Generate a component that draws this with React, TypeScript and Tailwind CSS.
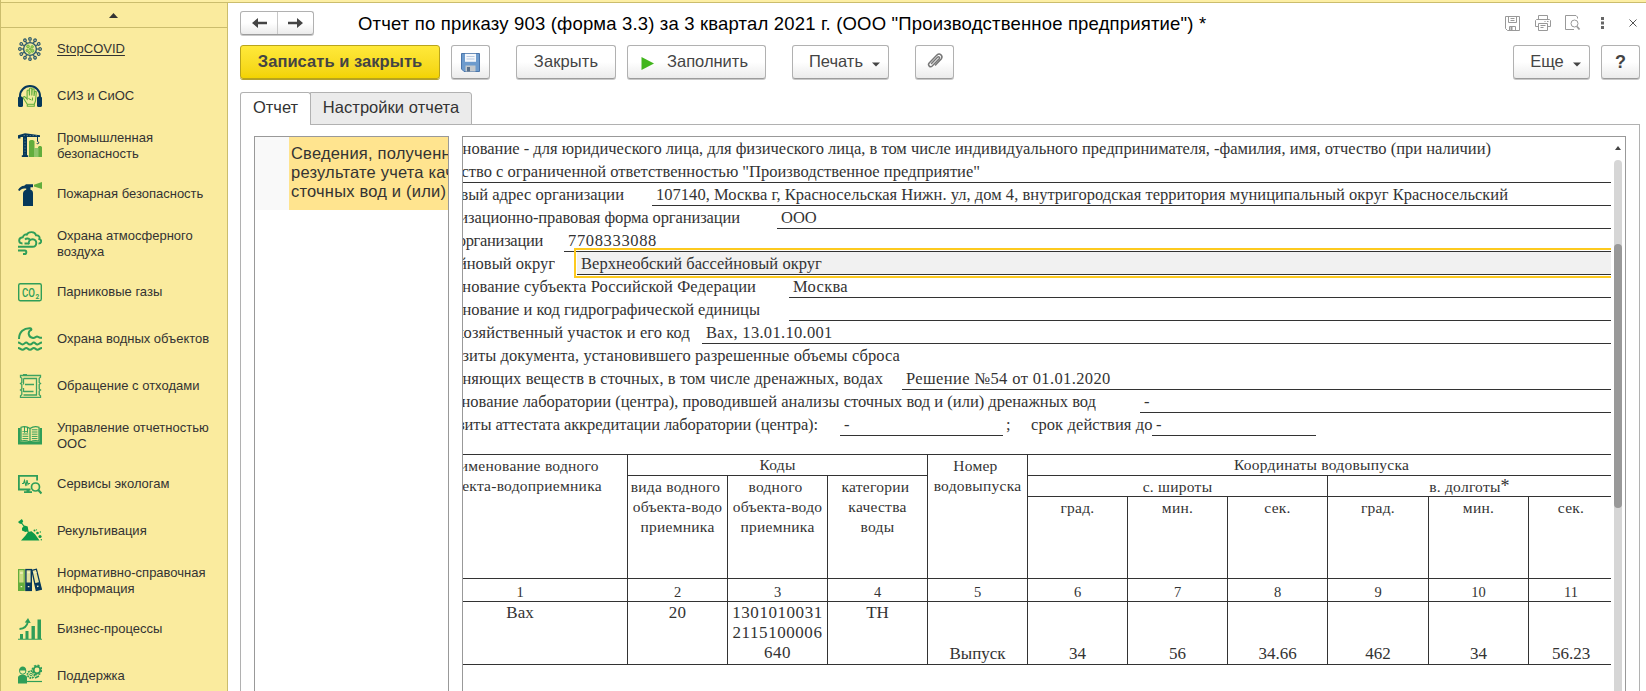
import type { ReactNode } from 'react';

const NAVY = '#06385a';
const LIME = '#62ad3c';
const GREEN = '#2f9e58';

interface MenuItem {
  lines: string[];
  icon: ReactNode;
  underline?: boolean;
}

const spikes = [0, 30, 60, 90, 120, 150, 180, 210, 240, 270, 300, 330];

const menu: MenuItem[] = [
  {
    lines: ['StopCOVID'],
    underline: true,
    icon: (
      <>
        {spikes.map((angle) => (
          <g key={angle} transform={`rotate(${angle} 12 12)`} fill="none" stroke="#2f5b6b" strokeWidth="1.2">
            <path d="M12 5.500V3.400" />
            <circle cx="12" cy="1.900" r="1.300" />
          </g>
        ))}
        <circle cx="12" cy="12" r="6.400" fill="#ebe99c" stroke="#2f5b6b" strokeWidth="1.400" />
        <g fill="#a6cf5f" stroke={LIME} strokeWidth=".8">
          <circle cx="10" cy="9.400" r="1.400" />
          <circle cx="14.200" cy="9.800" r="1.200" />
          <circle cx="9.200" cy="13.400" r="1.200" />
          <circle cx="12.200" cy="12" r="1" />
          <circle cx="14.400" cy="13.800" r="1.500" />
          <circle cx="11.400" cy="15.600" r="1" />
        </g>
      </>
    ),
  },
  {
    lines: ['СИЗ и СиОС'],
    icon: (
      <>
        <path d="M2 14v-2a10 10 0 0 1 20 0v2" fill="none" stroke={NAVY} strokeWidth="2" />
        <rect x="0" y="12.500" width="5" height="10.500" rx="1.600" fill={NAVY} />
        <rect x="19" y="12.500" width="5" height="10.500" rx="1.600" fill={NAVY} />
        <path
          d="M9.300 22.300v-2L5.300 14c-.5-1.300 1.200-1.900 2-.9l1.800 2V7c0-1.300 2-1.300 2.100 0l.3 4.500V5c0-1.400 2.300-1.400 2.300 0v6.500l.4-5.700c.1-1.300 2-1.200 2 .1l-.2 6 .6-3.700c.3-1.200 1.800-1 1.700.3l-.8 8.500-1.200 3v2.300z"
          fill="#eeeb9b"
          stroke={LIME}
          strokeWidth="1.100"
        />
        <path d="M9.300 20.300h7M10.500 14.500l3 1.500M14.500 13.500v3" stroke={LIME} strokeWidth="1" />
      </>
    ),
  },
  {
    lines: ['Промышленная', 'безопасность'],
    icon: (
      <>
        <path d="M11 24V8.500c0-2 5.500-2 5.500 0V24zM20 24V14.500c0-2 4-2 4 0V24z" fill={LIME} />
        <path d="M16 15h4.500v9H16z" fill="#8dc46a" />
        <path d="M5 3h4v19.500H5zM3.800 22.300h6.400V24H3.800zM0 2.200L7 .3l15 2v1.700H0zM0 3.500h2.500v2H0z" fill={NAVY} />
        <path d="M7 5.500v16M5.500 2.600h14" stroke="#4f7180" strokeWidth="1" strokeDasharray="1.500 1.500" />
        <path d="M19.500 4v4.500c2 .3 1.500 3-.8 2" fill="none" stroke={NAVY} strokeWidth="1" />
      </>
    ),
  },
  {
    lines: ['Пожарная безопасность'],
    icon: (
      <>
        <path d="M5 11.500c0-2 1.500-3.500 3.200-3.800V6.500H6.300C4 6.500 2.800 7.500 1.500 9L0 8c1.500-2.800 3.500-4 6.200-4.200L8 2.300h7v3h-2.500v2.400C14.500 8.200 15 9.600 15 11.500V24H5z" fill={NAVY} />
        <path d="M16 2.700L24 0v7l-8-2.500z" fill={LIME} />
      </>
    ),
  },
  {
    lines: ['Охрана атмосферного', 'воздуха'],
    icon: (
      <g fill="none" stroke={GREEN} strokeWidth="1.900">
        <path d="M4.500 12.500C.2 12.500-.2 6.800 4.800 6.300 5.800 3 8 3.400 8.700 3.700 10.500.2 17 .2 18 4.300c3.300-.2 4 2.200 3.300 3.700 3 1.200 2.200 4.600-.8 4.600" />
        <path d="M6.500 12.500h4M7 8.500c1.500-1.500 4-1.200 4.800.3" />
        <path d="M0 15.800h14.500c5 0 5-7.600.2-7.600-3 0-4.600 2.600-3.700 5.200" />
        <path d="M0 19.500h6.800c2.200.2 2 3.500-.3 3.500H5" />
      </g>
    ),
  },
  {
    lines: ['Парниковые газы'],
    icon: (
      <>
        <rect x=".7" y="3.700" width="22.600" height="17" rx="1.600" fill="none" stroke={GREEN} strokeWidth="1.400" />
        <text x="4" y="16.800" fontSize="12.500" fill={GREEN} textLength="13" lengthAdjust="spacingAndGlyphs" fontFamily="Roboto, sans-serif" fontWeight="500">
          CO
        </text>
        <text x="17.500" y="18.600" fontSize="6.500" fill={GREEN} fontFamily="Roboto, sans-serif" fontWeight="700">
          2
        </text>
      </>
    ),
  },
  {
    lines: ['Охрана водных объектов'],
    icon: (
      <g fill="none" stroke={GREEN} strokeWidth="2">
        <path d="M1 12C1 5 6 .8 12.300 1.200c1.200.1 1.500 1.800.3 2C9.500 5 10.200 10.500 15 11c2 .2 2.800-1.400 4-1.400 1.500 0 2 1.400 5 1.200" />
        <path d="M0 15.600c2.400 0 2.400 1.800 4.500 1.800s2.100-1.800 3.700-1.800c1.700 0 1.700 1.800 3.800 1.800s2.100-1.800 3.800-1.800 1.700 1.800 3.700 1.800S21.600 15.600 24 15.600" />
        <path d="M0 20.900c2.400 0 2.400 1.800 4.500 1.800s2.100-1.800 3.700-1.800c1.700 0 1.700 1.800 3.800 1.800s2.100-1.800 3.800-1.800 1.700 1.800 3.700 1.800S21.600 20.900 24 20.900" />
      </g>
    ),
  },
  {
    lines: ['Обращение с отходами'],
    icon: (
      <g fill="none" stroke="#3ea260" strokeWidth="1.300">
        <path d="M2.500 1.500h20v1.700l-1.300 1v4.300l1.300 1-1.300 1v4.500l1.300 1-1.300 1v3.700l1.300 1v1.800h-20v-1.800l1.300-1v-3.700l-1.300-1 1.300-1v-4.500l-1.300-1 1.300-1V4.200l-1.300-1z" />
        <path d="M5.500 4.500h13v16.500h-13M5.500 4.500v6M5.500 14v4M5 .7h4M7 10.500h9M5.500 17.500h10" />
      </g>
    ),
  },
  {
    lines: ['Управление отчетностью', 'ООС'],
    icon: (
      <>
        <path d="M0 5h2.500v13.500h19V5H24v16.500H0z" fill={GREEN} />
        <path d="M12 19V5.500C9 3.300 5.500 3.300 3 4.200V18c3.500-.7 6-.5 9 1zM12 19V5.500c3-2.200 6.500-2.200 9-1.300V18c-3.500-.7-6-.5-9 1z" fill="none" stroke={GREEN} strokeWidth="1.200" />
        <path d="M4.500 8.500h1.200M4.500 11h5.800M4.500 13.300h5.800M4.500 15.600h5.800M13.800 6.800h5.700M13.800 9h5.700M13.800 11.200h5.700M13.800 13.400h5.700M13.800 15.600h5.700" stroke={GREEN} strokeWidth="1" />
        <path d="M6.500 4v5.500l1.500-1.300 1.500 1.300V4" fill="none" stroke={GREEN} strokeWidth="1" />
      </>
    ),
  },
  {
    lines: ['Сервисы экологам'],
    icon: (
      <>
        <path d="M12.500 17.500H.9V3.900h18.200v4.600" fill="none" stroke={GREEN} strokeWidth="1.800" />
        <path d="M4 11.500h1.500l1-3 1.500 5.500L9 8l1 4.500.7-1H12" fill="none" stroke={GREEN} strokeWidth="1.100" />
        <path d="M8.500 17.500v1.800H6v1.700h8v-1.700h-2.500v-1.800z" fill={GREEN} />
        <circle cx="17.500" cy="15" r="4" fill="none" stroke={GREEN} strokeWidth="1.700" />
        <path d="M20.300 18l3.200 3.500" stroke={GREEN} strokeWidth="2.200" />
      </>
    ),
  },
  {
    lines: ['Рекультивация'],
    icon: (
      <g fill="#0c9a49">
        <path d="M0 3L3.800 0l1.400 2.200L3.500 5 1.500 4.500z" />
        <path d="M3.200 3.500l7.500 10" stroke="#0c9a49" strokeWidth="1.200" />
        <path d="M4 9l2.500-2.500 3.200 1 .8 4.500-3 1L4 11.500z" />
        <path d="M3 21.500l4.500-5 2.500-3.500 3.500-.8 3.500 3 4.500 6.300z" />
        <circle cx="16.500" cy="11.500" r="1" />
        <circle cx="19.500" cy="14" r="1.300" />
        <circle cx="18.500" cy="10.800" r=".6" />
        <circle cx="22" cy="17.500" r="1.600" />
        <circle cx="22.300" cy="13" r=".7" />
        <circle cx="23.300" cy="20.800" r=".7" />
      </g>
    ),
  },
  {
    lines: ['Нормативно-справочная', 'информация'],
    icon: (
      <>
        <rect x=".6" y="1.600" width="5.600" height="20.800" fill="#cddc83" stroke={LIME} strokeWidth="1.200" />
        <path d="M.6 14.500h5.600v8H.6z" fill={LIME} />
        <rect x="7.900" y="1.600" width="5.400" height="20.800" fill="#e3e0a0" stroke={NAVY} strokeWidth="1.400" />
        <path d="M7.900 14.500h5.400v8H7.900z" fill={NAVY} />
        <path d="M13.900 2.400l4.500-1.200 4.900 20-5 1.200z" fill="#eae4a0" stroke={NAVY} strokeWidth="1.300" />
        <path d="M16.600 15.300l5-1.300 1.900 7.200-5 1.200z" fill={NAVY} />
        <path d="M2 5h2.800M9.300 4.500H12M15.800 5l2.700-.7M2.600 18.700h1.600M9.800 18.700h1.600M19 18.500l1.500-.4" stroke="#f2f0c0" strokeWidth="1.300" />
      </>
    ),
  },
  {
    lines: ['Бизнес-процессы'],
    icon: (
      <>
        <path d="M2 17h3v5H2zM7.500 14h3v8h-3zM13.500 9h3.400v13h-3.400zM19.500 2.500H23V22h-3.500zM0 21.800h24v1H0z" fill={GREEN} />
        <path d="M1.500 12c4.500-.3 7.500-2.500 8.500-7.500" fill="none" stroke={GREEN} strokeWidth="1.800" />
        <path d="M6.800 5.500L10 1l2.700 5z" fill={GREEN} />
      </>
    ),
  },
  {
    lines: ['Поддержка'],
    icon: (
      <>
        <path d="M0 19.500v-6c0-2 3-3 4.500-3S9 11.500 9 13.500v6z" fill={GREEN} />
        <path d="M9 17.500h15" stroke={GREEN} strokeWidth="1.200" />
        <circle cx="4.700" cy="7" r="3.200" fill="#f3eda0" stroke={GREEN} strokeWidth="1" />
        <path d="M1.200 6.500c0-5.500 7-5.500 7 0z" fill={GREEN} />
        <circle cx="13" cy="10.500" r="3.500" fill="none" stroke={GREEN} strokeWidth="1.800" strokeDasharray="1.800 .8" />
        <circle cx="13" cy="10.500" r="1.300" fill="none" stroke={GREEN} strokeWidth="1" />
        <circle cx="19" cy="6" r="3.400" fill="none" stroke={GREEN} strokeWidth="2" />
        <circle cx="19" cy="6" r="4.800" fill="none" stroke={GREEN} strokeWidth="1.400" strokeDasharray="2 1.770" />
        <path d="M17 14l4-2" stroke={GREEN} strokeWidth="1.500" />
      </>
    ),
  },
];

const Sidebar = () => (
  <aside className="w-[228px] shrink-0 border-x border-[#cbbd6d] bg-[#faeb9e]">
    <div className="flex h-[25px] items-center justify-center border-b border-[#cbbd6d]">
      <svg width="9" height="5" viewBox="0 0 9 5" className="mr-0.5">
        <path d="M0 5L4.500 0L9 5z" fill="#333" />
      </svg>
    </div>
    <ul className="-mt-0.5">
      {menu.map((item) => (
        <li
          key={item.lines[0]}
          className={`flex gap-[15px] pl-[17px] ${item.lines.length > 1 ? 'h-[51px]' : 'h-[47px]'}`}
        >
          <svg
            width="24"
            height="24"
            viewBox="0 0 24 24"
            className={`shrink-0 ${item.lines.length > 1 ? 'mt-[13px]' : 'mt-[11px]'}`}
          >
            {item.icon}
          </svg>
          <div
            className={`text-[13px] leading-4 whitespace-nowrap text-[#333] ${
              item.lines.length > 1 ? 'mt-[10px]' : 'mt-[15px]'
            } ${item.underline ? 'underline underline-offset-2' : ''}`}
          >
            {item.lines.map((line) => (
              <div key={line}>{line}</div>
            ))}
          </div>
        </li>
      ))}
    </ul>
  </aside>
);

const Button = ({ className, children }: { className: string; children: ReactNode }) => (
  <button
    className={`flex h-[34px] shrink-0 items-center justify-center rounded-[3px] border border-[#b1b1b1] border-b-[#9b9b9b] bg-linear-to-b from-white from-50% to-[#ebebeb] pb-0.5 text-[16.5px] text-[#444] shadow-[0_1px_0_#c8c8c8] ${className}`}
  >
    {children}
  </button>
);

const Caret = () => (
  <svg width="8" height="5" viewBox="0 0 8 5" className="mt-[7px]">
    <path d="M0 .5h8L4 4.500z" fill="#444" />
  </svg>
);

const Arrow = ({ flip }: { flip?: boolean }) => (
  <svg width="15" height="12" viewBox="0 0 15 12" className={flip ? 'rotate-180' : ''}>
    <path d="M0 6l6-5v3.700h9v2.600H6V11z" fill="#444" />
  </svg>
);

const TitleBar = () => (
  <div className="mt-2 flex h-6 items-center">
    <div className="flex h-6 w-[74px] rounded-[3px] border border-[#b1b1b1] border-b-[#9b9b9b] bg-linear-to-b from-white from-50% to-[#ebebeb] shadow-[0_1px_0_#c8c8c8]">
      <button className="flex w-[37px] items-center justify-center border-r border-[#c8c8c8]">
        <Arrow />
      </button>
      <button className="flex flex-1 items-center justify-center">
        <Arrow flip />
      </button>
    </div>
    <h1 className="mt-px ml-11 text-[18.5px] tracking-[0.17px] whitespace-nowrap text-black">
      Отчет по приказу 903 (форма 3.3) за 3 квартал 2021 г. (ООО "Производственное предприятие") *
    </h1>
    <div className="mr-[9px] ml-auto flex items-center">
      <svg width="15" height="15" viewBox="0 0 15 15" fill="none" stroke="#999" className="mr-[15px]">
        <path d="M.5.5h14v14H2.500l-2-2zM3.500.5v6h8v-6M5.500 2.500h4M5.500 4.500h4M4.500 14v-3.500h6V14" />
        <path d="M5.500 11h2v3h-2z" fill="#999" stroke="none" />
      </svg>
      <svg width="16" height="16" viewBox="0 0 16 16" fill="none" stroke="#999" className="mr-[14px]">
        <path d="M3.500 4V.5h9V4M3.500 11.500H.5v-6l1-1h13l1 1v6h-3M9.500 6.500h1M12 6.500h1.500M3.500 8.500h9v7h-9zM5.500 10.500h5M5.500 12.500h3" />
      </svg>
      <svg width="16" height="16" viewBox="0 0 16 16" fill="none" stroke="#999" className="mr-[20px]">
        <path d="M12.500 3.500V2l-1.500-1.500H.5v14H9" />
        <circle cx="9.500" cy="8.500" r="3.500" />
        <path d="M12 11.500l2.500 3" strokeWidth="1.800" />
      </svg>
      <svg width="3" height="12" viewBox="0 0 3 12" fill="#666" className="mr-[25px]">
        <path d="M0 0h3v3H0zM0 4.500h3v3H0zM0 9h3v3H0z" />
      </svg>
      <svg width="8" height="8" viewBox="0 0 8 8" stroke="#555" strokeWidth="1">
        <path d="M.5.5l7 7M7.500.5l-7 7" />
      </svg>
    </div>
  </div>
);

const Toolbar = () => (
  <div className="mt-2.5 mr-1.5 flex">
    <button className="flex h-[34px] w-[200px] items-center justify-center rounded-[3px] border border-[#b9a41c] bg-linear-to-b from-[#ffe939] to-[#f3d300] pb-0.5 text-[16.5px] font-bold tracking-[0.05px] text-[#444] shadow-[0_1px_0_#b3a12e]">
      Записать и закрыть
    </button>
    <Button className="ml-[11px] w-[39px]">
      <svg width="19" height="19" viewBox="0 0 19 19" className="mt-0.5">
        <path d="M.5.5h18v18H3l-2.500-2.500z" fill="#6d9bcd" stroke="#4a75aa" />
        <path d="M4 .8h11v8H4z" fill="#f4f7fb" />
        <path d="M5.500 3.500h8M5.500 6h8" stroke="#b9cbe2" />
        <path d="M4.500 12.500h10v6h-10z" fill="#c3c8cc" />
        <path d="M6 14h3v4.500H6z" fill="#59708a" />
      </svg>
    </Button>
    <Button className="ml-[26px] w-[100px] tracking-[0.1px]">Закрыть</Button>
    <Button className="ml-[11px] w-[139px] gap-[13px] pr-1">
      <svg width="13" height="13" viewBox="0 0 13 13" className="mt-1">
        <path d="M.5 0L13 6.500L.5 13z" fill="#41b51c" />
      </svg>
      Заполнить
    </Button>
    <Button className="ml-[26px] w-[97px] gap-[9px] pl-2">
      Печать
      <Caret />
    </Button>
    <Button className="ml-[26px] w-[39px]">
      <svg width="18" height="18" viewBox="0 0 18 18" fill="none" stroke="#777" strokeWidth="1.500" strokeLinecap="round">
        <path d="M5.500 11.500l6-6.300c1.200-1.100 2.800.4 1.700 1.600l-7 7.200c-2 1.900-4.900-.6-3-2.900l7.700-8c2.800-2.600 6.600.8 4.300 3.900L9.500 13" />
      </svg>
    </Button>
    <Button className="ml-auto w-[77px] gap-[9px] pl-2">
      Еще
      <Caret />
    </Button>
    <Button className="ml-[11px] w-[39px]">
      <span className="mt-0.5 text-[18px] font-bold">?</span>
    </Button>
  </div>
);

interface FormRow {
  label: string;
  labelClass: string;
  gap?: string;
  value?: string;
}

const rows: FormRow[] = [
  {
    label: 'енование - для юридического лица, для физического лица, в том числе индивидуального предпринимателя, -фамилия, имя, отчество (при наличии)',
    labelClass: 'w-[1028px]',
  },
  { label: 'ество с ограниченной ответственностью "Производственное предприятие"', labelClass: 'w-[517px]' },
  {
    label: 'овый адрес организации',
    labelClass: 'w-[161px]',
    gap: 'ml-[28px] tracking-[0.03px]',
    value: '107140, Москва г, Красносельская Нижн. ул, дом 4, внутригородская территория муниципальный округ Красносельский',
  },
  { label: 'изационно-правовая форма организации', labelClass: 'w-[277px] tracking-[-0.1px]', gap: 'ml-[37px]', value: 'ООО' },
  { label: 'организации', labelClass: 'w-[80px] tracking-[-0.3px]', gap: 'ml-[21px] tracking-[0.65px]', value: '7708333088' },
  { label: 'ейновый округ', labelClass: 'w-[92px]', value: 'Верхнеобский бассейновый округ' },
  { label: 'енование субъекта Российской Федерации', labelClass: 'w-[293px] tracking-[0.1px]', gap: 'ml-[33px] tracking-[0.3px]', value: 'Москва' },
  { label: 'енование и код гидрографической единицы', labelClass: 'w-[297px]', gap: 'ml-[29px]', value: '' },
  { label: 'хозяйственный участок и его код', labelClass: 'w-[227px] tracking-[0.1px]', gap: 'ml-[12px] tracking-[0.3px]', value: 'Вах, 13.01.10.001' },
  { label: 'зиты документа, установившего разрешенные объемы сброса', labelClass: 'w-[437px] tracking-[0.07px]' },
  {
    label: 'зняющих веществ в сточных, в том числе дренажных, водах',
    labelClass: 'w-[420px] tracking-[0.08px]',
    gap: 'ml-[19px] tracking-[0.37px]',
    value: 'Решение №54 от 01.01.2020',
  },
  {
    label: 'енование лаборатории (центра), проводившей анализы сточных вод и (или) дренажных вод',
    labelClass: 'w-[633px]',
    gap: 'ml-[44px]',
    value: '-',
  },
];

const Label = ({ row }: { row: FormRow }) => (
  <div className={`flex shrink-0 justify-end overflow-hidden ${row.labelClass}`}>
    <span>{row.label}</span>
  </div>
);

const FormLines = () => (
  <div className="text-[16.5px] leading-6 whitespace-nowrap">
    {rows.map((row, i) => {
      // the whole second line is underlined, not only its value
      if (i === 1) {
        return (
          <div key={row.label} className="flex h-[23px] border-b border-[#333]">
            <Label row={row} />
          </div>
        );
      }
      // active cell
      if (i === 5) {
        return (
          <div key={row.label} className="flex h-[23px]">
            <Label row={row} />
            <div className="relative ml-[22px] flex-1 border-b border-[#333] bg-[#f1f1f1] pl-1 tracking-[0.04px]">
              {row.value}
              <div className="absolute -top-[4px] right-0 -bottom-[4px] -left-[3px] border-2 border-r-0 border-[#fdca1f]" />
            </div>
          </div>
        );
      }
      return (
        <div key={row.label} className="flex h-[23px]">
          <Label row={row} />
          {row.value !== undefined && (
            <div className={`flex-1 border-b border-[#333] pl-1 ${row.gap}`}>{row.value}</div>
          )}
        </div>
      );
    })}
    <div className="flex h-[23px]">
      <div className="flex w-[355px] shrink-0 justify-end overflow-hidden tracking-[-0.1px]">
        <span>зиты аттестата аккредитации лаборатории (центра):</span>
      </div>
      <div className="ml-[22px] w-[163px] border-b border-[#333] pl-1">-</div>
      <div className="ml-[3px] w-[25px]">;</div>
      <div className="w-[121px] tracking-[0.1px]">срок действия до</div>
      <div className="w-[164px] border-b border-[#333] pl-1">-</div>
    </div>
  </div>
);

const cell = 'flex justify-center text-center border-[#333]';

const ReportTable = () => (
  <div className="mt-[18px] grid grid-cols-[165px_repeat(7,100px)_101px_100px_82px] grid-rows-[21px_21px_82px_23px_63px] border-t border-[#333] text-[15.5px] leading-5 tracking-[0.25px]">
    <div className={`${cell} row-span-3 justify-end overflow-hidden border-r border-b pt-px`}>
      <div className="w-[214px] shrink-0">
        Наименование водного
        <br />
        объекта-водоприемника
      </div>
    </div>
    <div className={`${cell} col-span-3 border-r border-b`}>Коды</div>
    <div className={`${cell} row-span-3 border-r border-b pt-px`}>
      Номер&nbsp;
      <br />
      водовыпуска
    </div>
    <div className={`${cell} col-span-6 border-b pl-1`}>Координаты водовыпуска</div>
    <div className={`${cell} row-span-2 border-r border-b pt-px`}>
      вида водного&nbsp;
      <br />
      объекта-водо
      <br />
      приемника
    </div>
    <div className={`${cell} row-span-2 border-r border-b pt-px`}>
      водного&nbsp;
      <br />
      объекта-водо
      <br />
      приемника
    </div>
    <div className={`${cell} row-span-2 border-r border-b pt-px`}>
      категории&nbsp;
      <br />
      качества
      <br />
      воды
    </div>
    <div className={`${cell} col-span-3 border-r border-b pt-px`}>с. широты</div>
    <div className={`${cell} col-span-3 border-b pt-px`}>
      <span>
        в. долготы<span className="text-[18px] leading-none">*</span>
      </span>
    </div>
    {['град.', 'мин.', 'сек.', 'град.', 'мин.', 'сек.'].map((unit, i) => (
      <div key={i} className={`${cell} border-b pt-px ${i < 5 ? 'border-r' : 'pl-0.5'}`}>
        {unit}
      </div>
    ))}
    <div className={`${cell} justify-end overflow-hidden border-r border-b pt-[3px] text-[14.5px] tracking-normal`}>
      <div className="w-[214px] shrink-0">1</div>
    </div>
    {[2, 3, 4, 5, 6, 7, 8, 9, 10, 11].map((n) => (
      <div key={n} className={`${cell} border-b pt-[3px] text-[14.5px] tracking-normal ${n < 11 ? 'border-r' : 'pl-0.5'}`}>
        {n}
      </div>
    ))}
    <div className={`${cell} justify-end overflow-hidden border-r border-b pt-px text-[17px] tracking-normal`}>
      <div className="w-[214px] shrink-0">Вах</div>
    </div>
    <div className={`${cell} border-r border-b pt-px text-[17px]`}>20</div>
    <div className={`${cell} border-r border-b pt-px text-[17px] tracking-[0.55px]`}>
      1301010031
      <br />
      2115100006
      <br />
      640
    </div>
    <div className={`${cell} border-r border-b pt-px text-[17px] tracking-normal`}>ТН</div>
    {['Выпуск', '34', '56', '34.66', '462', '34', '56.23'].map((value, i) => (
      <div key={i} className={`${cell} items-end border-b text-[17px] tracking-normal ${i < 6 ? 'border-r' : 'pl-0.5'}`}>
        {value}
      </div>
    ))}
  </div>
);

const ScrollBar = () => (
  <div className="ml-[3px] flex w-2 flex-col items-center">
    <svg width="6" height="4" viewBox="0 0 6 4" className="mt-[9px] mb-[10px] shrink-0">
      <path d="M0 4L3 0l3 4z" fill="#444" />
    </svg>
    <div className="w-2 flex-1 rounded-t-full bg-[#d6d6d6] pt-[84px]">
      <div className="h-[264px] rounded-full bg-[#999]" />
    </div>
  </div>
);

const App = () => {
  return (
    <div className="flex h-[691px] flex-col overflow-hidden bg-white font-['Liberation_Sans',Arial,sans-serif]">
      <div className="h-[3px] shrink-0 border-b border-l border-[#cbbd6d] bg-[#fdefa5]" />
      <div className="flex min-h-0 flex-1">
        <Sidebar />
        <main className="flex min-w-0 flex-1 flex-col pl-3">
          <TitleBar />
          <Toolbar />
          <div className="relative z-10 mt-[13px] -mb-px flex h-[33px] shrink-0 text-[16.5px] text-[#333]">
            <div className="flex w-[71px] justify-center rounded-t-[3px] border border-b-0 border-[#b1b1b1] bg-white pt-0.5">
              Отчет
            </div>
            <div className="-ml-px flex w-[162px] justify-center rounded-tr-[3px] border border-[#b1b1b1] bg-[#ebebeb] pt-0.5 tracking-[0.05px]">
              Настройки отчета
            </div>
          </div>
          <div className="mr-1.5 flex min-h-0 flex-1 border border-b-0 border-[#b1b1b1] pt-[11px] pr-[13px] pl-[13px]">
            <div className="w-[195px] shrink-0 border border-b-0 border-[#999]">
              <div className="flex h-[73px] overflow-hidden">
                <div className="w-[34px] shrink-0 bg-[#f9f9f9]" />
                <div className="flex-1 overflow-hidden bg-[#ffe48f] pt-[7px] pl-0.5 text-[16.5px] leading-[19.200px] tracking-[0.2px] whitespace-nowrap text-[#333]">
                  Сведения, полученные в
                  <br />
                  результате учета качества
                  <br />
                  сточных вод и (или)
                </div>
              </div>
            </div>
            <div className="ml-[13px] flex min-w-0 flex-1 overflow-hidden border border-b-0 border-[#999]">
              <div className="w-[1148px] shrink-0 overflow-hidden font-['Liberation_Serif','Times_New_Roman',serif] text-[#333]">
                <FormLines />
                <ReportTable />
              </div>
              <ScrollBar />
            </div>
          </div>
        </main>
      </div>
    </div>
  );
};

export default App;
